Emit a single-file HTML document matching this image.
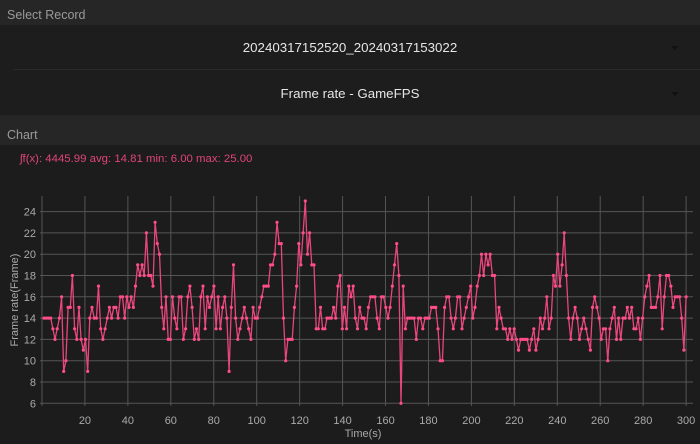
<!DOCTYPE html>
<html><head><meta charset="utf-8"><style>
html,body{margin:0;padding:0;width:700px;height:444px;overflow:hidden;background:#1c1c1c;font-family:"Liberation Sans",sans-serif}
.hd{position:absolute;left:0;width:700px;background:#262626;color:#9a9a9a;font-size:12.5px}
.dd{position:absolute;left:0;width:700px;background:#1d1d1d;color:#e6e6e6;font-size:13.3px;text-align:center}
.arr{position:absolute;right:21px;width:0;height:0;border-left:4px solid transparent;border-right:4px solid transparent;border-top:4px solid #111}
</style></head><body>
<div class="hd" style="top:0;height:25px"><span style="position:absolute;left:7px;top:8px">Select Record</span></div>
<div class="dd" style="top:25px;height:44px"><span style="position:absolute;left:0;right:0;top:15px">20240317152520_20240317153022</span><div class="arr" style="top:21px"></div></div>
<div style="position:absolute;left:13px;right:0;top:69px;height:1px;background:#2a2a2a"></div>
<div class="dd" style="top:70px;height:45px"><span style="position:absolute;left:0;right:0;top:16px">Frame rate - GameFPS</span><div class="arr" style="top:22px"></div></div>
<div class="hd" style="top:115px;height:30px"><span style="position:absolute;left:7px;top:13px">Chart</span></div>
<div style="position:absolute;left:20px;top:153px;color:#e0457a;font-size:11.4px">ʃf(x): 4445.99 avg: 14.81 min: 6.00 max: 25.00</div>
<svg id="c" width="700" height="444" style="position:absolute;left:0;top:0" font-family="Liberation Sans, sans-serif"></svg>
<script>
var s=document.getElementById('c'),h='';
function X(t){return 42+2.147*t}function Y(v){return 403.3-(v-6)*10.65}
for(var v=6;v<=24;v+=2){var y=Y(v);h+='<line x1="40" x2="693" y1="'+y+'" y2="'+y+'" stroke="#555" stroke-width="1"/>';h+='<text x="36" y="'+(y+4)+'" fill="#aaa" font-size="11" text-anchor="end">'+v+'</text>';}
h+='<line x1="42" x2="42" y1="196" y2="406" stroke="#555"/>';
for(var t=20;t<=300;t+=20){var x=X(t);h+='<line x1="'+x+'" x2="'+x+'" y1="196" y2="406" stroke="#555"/>';h+='<text x="'+x+'" y="424" fill="#aaa" font-size="11" text-anchor="middle">'+t+'</text>';}
h+='<text x="363" y="437" fill="#aaa" font-size="11" text-anchor="middle">Time(s)</text>';
h+='<text transform="translate(18,300) rotate(-90)" fill="#aaa" font-size="11" text-anchor="middle">Frame rate(Frame)</text>';
var a=[14,14,14,14,13,12,13,14,16,9,10,15,15,18,13,12,15,12,11,12,9,14,15,14,14,17,13,12,13,14,15,14,15,15,14,16,16,14,16,15,16,15,17,19,18,19,18,22,18,18,17,23,21,20,15,13,16,12,12,16,14,13,16,16,12,13,16,17,15,12,13,12,16,17,13,16,15,16,17,13,16,13,15,16,14,9,15,19,14,12,13,14,15,14,13,12,15,14,14,15,16,17,17,17,19,19,20,23,21,21,14,10,12,12,12,15,17,21,19,22,25,20,22,19,19,13,13,15,13,13,14,14,14,15,14,17,18,13,15,
13,17,16,17,14,13,15,14,14,13,15,16,16,16,14,13,16,16,15,14,15,17,19,21,18,6,17,13,14,14,14,14,12,14,14,13,14,14,14,15,15,15,13,10,10,15,16,16,14,13,14,16,16,13,14,15,16,17,14,15,17,18,20,18,20,19,20,18,18,13,15,14,13,13,12,13,12,13,12,11,12,12,12,12,11,12,13,11,12,14,13,14,16,13,14,18,17,20,17,19,22,18,14,12,14,15,14,12,13,14,13,12,11,15,16,15,14,12,13,13,10,13,14,15,12,14,12,14,14,15,14,15,13,13,14,12,14,16,17,18,15,15,15,16,18,13,16,18,18,17,15,16,16,16,14,11,16];
var n=a.length,p='',d='';
for(var i=0;i<n;i++){var x=X(1+i*299/(n-1)),y=Y(a[i]);p+=x.toFixed(1)+','+y.toFixed(1)+' ';d+='<circle cx="'+x.toFixed(1)+'" cy="'+y.toFixed(1)+'" r="1.6" fill="#ff4d8a"/>';}
h+='<polyline points="'+p+'" fill="none" stroke="#e8467c" stroke-width="1.3"/>'+d;
s.innerHTML=h;
</script>
</body></html>
